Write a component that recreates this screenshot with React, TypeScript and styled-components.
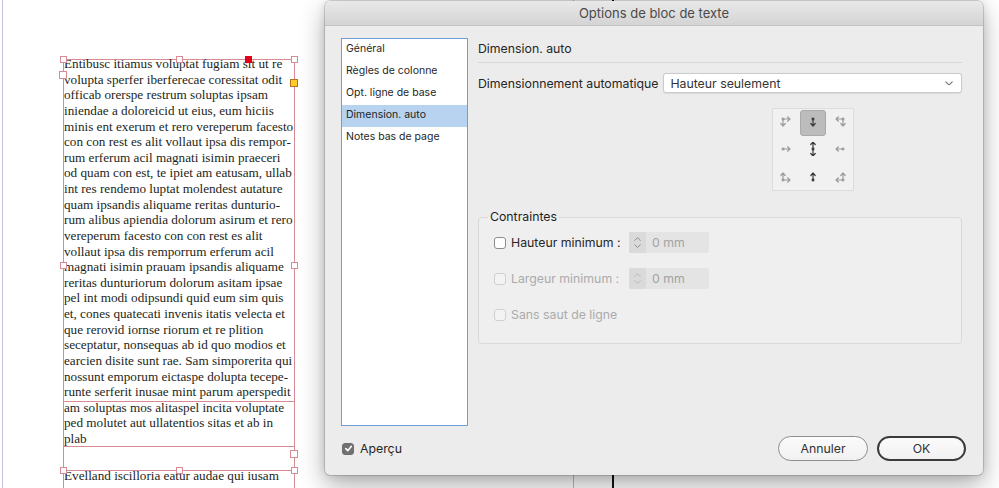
import React from "react";
import styled, { createGlobalStyle } from "styled-components";

const Global = createGlobalStyle`
  html, body { margin: 0; padding: 0; background: #ffffff; }
  body { width: 999px; height: 488px; overflow: hidden; }
`;

const Stage = styled.div`
  position: relative;
  width: 999px;
  height: 488px;
  overflow: hidden;
  background: #ffffff;
`;

/* ---------- document canvas ---------- */
const Canvas = styled.div`
  height: 100%;
  box-sizing: border-box;
  margin-left: 2px;
  border-left: 1px solid #cbc2e2;
  padding: 59px 0 0 60px;
`;

const Frame = styled.div`
  position: relative;
  width: 232px;
  height: 429px;
  box-sizing: border-box;
  border: 1px solid #d98b93;
  border-bottom: none;
`;

const Story = styled.div<{ $gap?: number }>`
  margin-top: ${(p) => p.$gap ?? 0}px;
  font-family: "Liberation Serif", "Times New Roman", serif;
  font-size: 13.2px;
  line-height: 15.625px;
  color: #231f20;
  white-space: nowrap;
`;

const Line = styled.div``;

const FrameRule = styled.div<{ $y: number }>`
  position: absolute;
  left: -1px;
  right: -1px;
  top: ${(p) => p.$y - 60}px;
  height: 1px;
  background: #d98b93;
`;

const Handle = styled.div<{ $x: number; $y: number; $s: number; $kind?: "red" | "yellow" }>`
  position: absolute;
  box-sizing: border-box;
  width: ${(p) => p.$s}px;
  height: ${(p) => p.$s}px;
  left: ${(p) => p.$x - 64 - p.$s / 2}px;
  top: ${(p) => p.$y - 60 - p.$s / 2}px;
  background: ${(p) => (p.$kind === "red" ? "#e3001b" : p.$kind === "yellow" ? "#ffca2a" : "#ffffff")};
  border: 1px solid ${(p) => (p.$kind === "red" ? "#e3001b" : p.$kind === "yellow" ? "#b8741a" : "#d98b93")};
`;

const Guide = styled.div<{ $x: number; $w: number; $c: string }>`
  position: absolute;
  top: 0;
  bottom: 0;
  left: ${(p) => p.$x}px;
  width: ${(p) => p.$w}px;
  background: ${(p) => p.$c};
`;

/* ---------- dialog ---------- */
const Dialog = styled.div`
  position: absolute;
  left: 325px;
  top: 1px;
  width: 658px;
  height: 474px;
  display: flex;
  flex-direction: column;
  background: #ececec;
  border-radius: 5px;
  box-shadow: 0 0 0 0.5px rgba(0, 0, 0, 0.28), 0 10px 26px rgba(0, 0, 0, 0.32), 0 0 10px rgba(0, 0, 0, 0.12);
  font-family: Inter, "Liberation Sans", sans-serif;
  color: #262626;
  overflow: hidden;
`;

const TitleBar = styled.div`
  flex: none;
  height: 24px;
  display: flex;
  align-items: center;
  justify-content: center;
  background: linear-gradient(#e9e9e9, #d4d4d4);
  border-bottom: 1px solid #c3c3c3;
  font-size: 13px;
  color: #4a4a4a;
`;

const Body = styled.div`
  flex: none;
  display: flex;
  gap: 10px;
  padding: 12px 21px 0 16px;
`;

const Sidebar = styled.div`
  flex: none;
  width: 127px;
  height: 388px;
  box-sizing: border-box;
  border: 1px solid #6c9fd9;
  background: #ffffff;
`;

const NavItem = styled.div<{ $active?: boolean }>`
  height: 22px;
  box-sizing: border-box;
  padding: 2px 0 0 4px;
  line-height: 15px;
  font-size: 10.5px;
  color: #1f1f1f;
  background: ${(p) => (p.$active ? "#b7d3f0" : "transparent")};
`;

const Panel = styled.div`
  flex: 1;
  display: flex;
  flex-direction: column;
`;

const PanelHeader = styled.div`
  padding: 3px 0 5px 0;
  line-height: 16px;
  font-size: 12.3px;
  border-bottom: 1px solid #d7d7d7;
`;

const FormGrid = styled.div`
  margin-top: 10px;
  display: grid;
  grid-template-columns: auto 1fr;
  column-gap: 5px;
  row-gap: 15px;
  align-items: center;
`;

const FieldLabel = styled.div`
  font-size: 12.3px;
`;

const Select = styled.div`
  height: 20px;
  box-sizing: border-box;
  display: flex;
  align-items: center;
  justify-content: space-between;
  padding: 0 8px 0 6px;
  background: #ffffff;
  border: 1px solid #cbcbcb;
  border-radius: 3px;
  box-shadow: 0 0.5px 1px rgba(0, 0, 0, 0.08);
  font-size: 12.3px;
  color: #333333;
`;

const AnchorGrid = styled.div`
  grid-column: 2;
  justify-self: center;
  width: 82px;
  height: 83px;
  box-sizing: border-box;
  padding: 1px;
  display: grid;
  grid-template-columns: repeat(3, 1fr);
  grid-template-rows: repeat(3, 1fr);
  gap: 0;
  background: #f1f1f1;
  border: 1px solid #dcdcdc;
`;

const AnchorCell = styled.div<{ $selected?: boolean }>`
  display: flex;
  align-items: center;
  justify-content: center;
  border-radius: 3px;
  background: ${(p) => (p.$selected ? "#bcbcbc" : "transparent")};
  border: 1px solid ${(p) => (p.$selected ? "#a9a9a9" : "transparent")};
`;

const Group = styled.fieldset`
  margin: 18px 0 0 0;
  padding: 7px 0 18px 15px;
  min-inline-size: 0;
  border: 1px solid #d9d9d9;
  border-radius: 4px;
  background: #efefef;
  display: flex;
  flex-direction: column;
  gap: 15px;
`;

const Legend = styled.legend`
  margin-left: -6px;
  padding: 0 2px;
  line-height: 16px;
  font-size: 12.3px;
  color: #1f1f1f;
`;

const CheckRow = styled.div<{ $disabled?: boolean }>`
  display: flex;
  align-items: center;
  height: 21px;
  font-size: 12.3px;
  color: ${(p) => (p.$disabled ? "#ababab" : "#262626")};
`;

const Box = styled.div<{ $disabled?: boolean; $checked?: boolean }>`
  flex: none;
  width: 12px;
  height: 12px;
  box-sizing: border-box;
  border-radius: 3px;
  display: flex;
  align-items: center;
  justify-content: center;
  border: 1px solid ${(p) => (p.$checked ? "#6e6e6e" : p.$disabled ? "#d0d0d0" : "#8c8c8c")};
  background: ${(p) => (p.$checked ? "#717171" : p.$disabled ? "#f3f3f3" : "#ffffff")};
`;

const RowLabel = styled.div<{ $w?: number }>`
  margin-left: 5px;
  width: ${(p) => (p.$w ? `${p.$w}px` : "auto")};
`;

const Spinner = styled.div`
  width: 80px;
  height: 21px;
  display: flex;
  background: #e4e4e4;
  border-radius: 2px;
  overflow: hidden;
  color: #a3a3a3;
`;

const Stepper = styled.div<{ $disabled?: boolean }>`
  width: 17px;
  display: flex;
  align-items: center;
  justify-content: center;
  background: #dadada;
  color: ${(p) => (p.$disabled ? "#b5b5b5" : "#8a8a8a")};
`;

const SpinValue = styled.div`
  padding-left: 6px;
  display: flex;
  align-items: center;
  font-size: 12.3px;
`;

const Footer = styled.div`
  flex: none;
  display: flex;
  align-items: center;
  padding: 10px 17px 0 17px;
  height: 25px;
`;

const PreviewLabel = styled.div`
  margin-left: 6px;
  font-size: 12.3px;
  flex: 1;
`;

const PillButton = styled.div<{ $default?: boolean }>`
  width: ${(p) => (p.$default ? 89 : 90)}px;
  height: 25px;
  box-sizing: border-box;
  margin-left: ${(p) => (p.$default ? 9 : 0)}px;
  display: flex;
  align-items: center;
  justify-content: center;
  border-radius: 13px;
  border: ${(p) => (p.$default ? "2px solid #3b3b3b" : "1px solid #8e8e8e")};
  background: linear-gradient(#fbfbfb, #f1f1f1);
  font-size: 12.3px;
  color: #333333;
`;

/* ---------- icons ---------- */
type Dir = "up" | "down" | "left" | "right";

const AnchorIcon: React.FC<{ ax: number; ay: number; dirs: Dir[]; dark?: boolean }> = ({ ax, ay, dirs, dark }) => {
  const c = dark ? "#3a3a3a" : "#9c9c9c";
  const len = 7;
  const parts: string[] = [];
  dirs.forEach((d) => {
    const dx = d === "right" ? 1 : d === "left" ? -1 : 0;
    const dy = d === "down" ? 1 : d === "up" ? -1 : 0;
    const tx = ax + dx * len;
    const ty = ay + dy * len;
    parts.push(`M${ax} ${ay}L${tx} ${ty}`);
    if (dx !== 0) parts.push(`M${tx - dx * 2.5} ${ty - 2.2}L${tx} ${ty}L${tx - dx * 2.5} ${ty + 2.2}`);
    else parts.push(`M${tx - 2.2} ${ty - dy * 2.5}L${tx} ${ty}L${tx + 2.2} ${ty - dy * 2.5}`);
  });
  return (
    <svg width="14" height="14" viewBox="0 0 14 14">
      <path d={parts.join("")} stroke={c} strokeWidth="1.2" fill="none" strokeLinecap="round" strokeLinejoin="round" />
      <rect x={ax - 1.3} y={ay - 1.3} width="2.6" height="2.6" fill={c} />
    </svg>
  );
};

const Chevron: React.FC<{ up?: boolean; w?: number; c?: string }> = ({ up, w = 7, c = "currentColor" }) => (
  <svg width={w} height={w * 0.6} viewBox="0 0 10 6" style={{ display: "block" }}>
    <path d={up ? "M1 5L5 1L9 5" : "M1 1L5 5L9 1"} stroke={c} strokeWidth="1.3" fill="none" strokeLinecap="round" strokeLinejoin="round" />
  </svg>
);

const StepGlyphs = styled.div`
  display: flex;
  flex-direction: column;
  gap: 3px;
`;

const Check = () => (
  <svg width="9" height="9" viewBox="0 0 10 10">
    <path d="M2 5.2L4.2 7.4L8.2 2.6" stroke="#ffffff" strokeWidth="1.8" fill="none" strokeLinecap="round" strokeLinejoin="round" />
  </svg>
);

/* ---------- content ---------- */
const storyLines = [
  "Entibusc itiamus voluptat fugiam sit ut re",
  "volupta sperfer iberferecae coressitat odit",
  "officab orerspe restrum soluptas ipsam",
  "iniendae a doloreicid ut eius, eum hiciis",
  "minis ent exerum et rero vereperum facesto",
  "con con rest es alit vollaut ipsa dis rempor-",
  "rum erferum acil magnati isimin praeceri",
  "od quam con est, te ipiet am eatusam, ullab",
  "int res rendemo luptat molendest autature",
  "quam ipsandis aliquame reritas dunturio-",
  "rum alibus apiendia dolorum asirum et rero",
  "vereperum facesto con con rest es alit",
  "vollaut ipsa dis remporrum erferum acil",
  "magnati isimin prauam ipsandis aliquame",
  "reritas dunturiorum dolorum asitam ipsae",
  "pel int modi odipsundi quid eum sim quis",
  "et, cones quatecati invenis itatis velecta et",
  "que rerovid iornse riorum et re plition",
  "seceptatur, nonsequas ab id quo modios et",
  "earcien disite sunt rae. Sam simporerita qui",
  "nossunt emporum eictaspe dolupta tecepe-",
  "runte serferit inusae mint parum aperspedit",
  "am soluptas mos alitaspel incita voluptate",
  "ped molutet aut ullatentios sitas et ab in",
  "plab",
];

const nextLines = ["Evelland iscilloria eatur audae qui iusam"];

const handles: { x: number; y: number; s: number; kind?: "red" | "yellow" }[] = [
  { x: 63, y: 59, s: 7 },
  { x: 179, y: 59, s: 7 },
  { x: 294, y: 59, s: 7 },
  { x: 63, y: 75, s: 8 },
  { x: 248.5, y: 59.5, s: 7, kind: "red" },
  { x: 294, y: 83, s: 8, kind: "yellow" },
  { x: 63, y: 265, s: 7 },
  { x: 294, y: 265, s: 7 },
  { x: 294, y: 454, s: 8 },
  { x: 63, y: 470, s: 7 },
  { x: 179, y: 470, s: 7 },
  { x: 294, y: 470, s: 7 },
];

const navItems = ["Général", "Règles de colonne", "Opt. ligne de base", "Dimension. auto", "Notes bas de page"];

const anchors: { ax: number; ay: number; dirs: Dir[]; dark?: boolean; selected?: boolean }[] = [
  { ax: 3, ay: 3, dirs: ["right", "down"] },
  { ax: 7, ay: 3, dirs: ["down"], dark: true, selected: true },
  { ax: 11, ay: 3, dirs: ["left", "down"] },
  { ax: 3, ay: 7, dirs: ["right"] },
  { ax: 7, ay: 7, dirs: ["up", "down"], dark: true },
  { ax: 11, ay: 7, dirs: ["left"] },
  { ax: 3, ay: 11, dirs: ["right", "up"] },
  { ax: 7, ay: 11, dirs: ["up"], dark: true },
  { ax: 11, ay: 11, dirs: ["left", "up"] },
];

const SpinField: React.FC<{ disabled?: boolean }> = ({ disabled }) => (
  <Spinner>
    <Stepper $disabled={disabled}>
      <StepGlyphs>
        <Chevron up w={7} />
        <Chevron w={7} />
      </StepGlyphs>
    </Stepper>
    <SpinValue>0 mm</SpinValue>
  </Spinner>
);

export default function App() {
  return (
    <Stage>
      <Global />
      <Canvas>
        <Frame>
          <Story $gap={-4}>
            {storyLines.map((l, i) => (
              <Line key={i}>{l}</Line>
            ))}
          </Story>
          <Story $gap={21}>
            {nextLines.map((l, i) => (
              <Line key={i}>{l}</Line>
            ))}
          </Story>
          <FrameRule $y={401} />
          <FrameRule $y={446} />
          <FrameRule $y={470} />
          {handles.map((h, i) => (
            <Handle key={i} $x={h.x} $y={h.y} $s={h.s} $kind={h.kind} />
          ))}
        </Frame>
      </Canvas>
      <Guide $x={573} $w={1} $c="#bdb5da" />
      <Guide $x={612} $w={2} $c="#111111" />

      <Dialog>
        <TitleBar>Options de bloc de texte</TitleBar>
        <Body>
          <Sidebar>
            {navItems.map((n) => (
              <NavItem key={n} $active={n === "Dimension. auto"}>
                {n}
              </NavItem>
            ))}
          </Sidebar>
          <Panel>
            <PanelHeader>Dimension. auto</PanelHeader>
            <FormGrid>
              <FieldLabel>Dimensionnement automatique</FieldLabel>
              <Select>
                <span>Hauteur seulement</span>
                <Chevron w={8} c="#6a6a6a" />
              </Select>
              <AnchorGrid>
                {anchors.map((a, i) => (
                  <AnchorCell key={i} $selected={a.selected}>
                    <AnchorIcon ax={a.ax} ay={a.ay} dirs={a.dirs} dark={a.dark} />
                  </AnchorCell>
                ))}
              </AnchorGrid>
            </FormGrid>
            <Group>
              <Legend>Contraintes</Legend>
              <CheckRow>
                <Box />
                <RowLabel $w={118}>Hauteur minimum :</RowLabel>
                <SpinField />
              </CheckRow>
              <CheckRow $disabled>
                <Box $disabled />
                <RowLabel $w={118}>Largeur minimum :</RowLabel>
                <SpinField disabled />
              </CheckRow>
              <CheckRow $disabled>
                <Box $disabled />
                <RowLabel>Sans saut de ligne</RowLabel>
              </CheckRow>
            </Group>
          </Panel>
        </Body>
        <Footer>
          <Box $checked>
            <Check />
          </Box>
          <PreviewLabel>Aperçu</PreviewLabel>
          <PillButton>Annuler</PillButton>
          <PillButton $default>OK</PillButton>
        </Footer>
      </Dialog>
    </Stage>
  );
}
